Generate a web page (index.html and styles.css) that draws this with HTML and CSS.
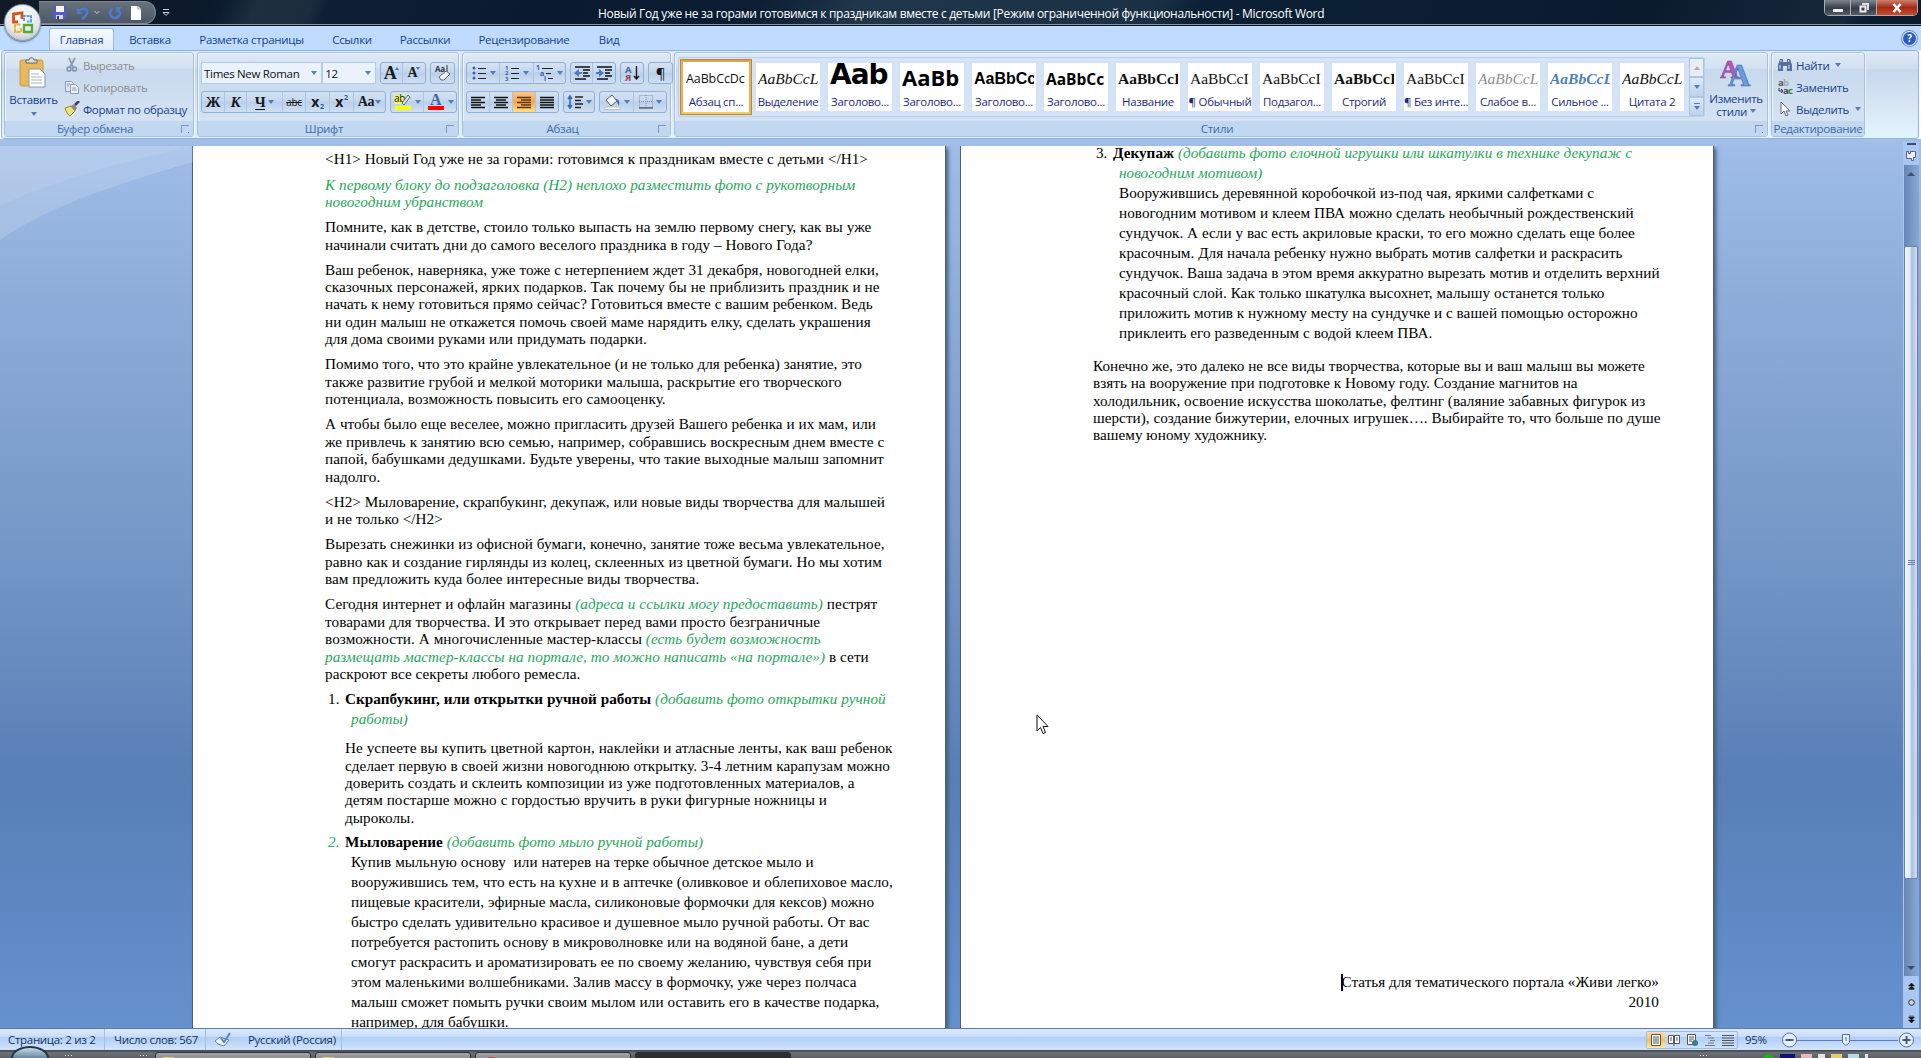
FILE: index.html
```html
<!DOCTYPE html>
<html lang="ru">
<head>
    <meta charset="UTF-8">
    <title>Новый Год уже не за горами - Microsoft Word</title>
    <link rel="stylesheet" href="styles.css">
</head>
<body>
    <div class="window">
        <header class="titlebar">
            <div class="quick-access">
                <svg width="16" height="16" viewBox="0 0 16 16"><path d="M1 1h13v13H2l-1-1z" fill="#5459c8"/><path d="M4 1h8v6H4z" fill="#f3f5ff"/><path d="M4 10h7v4H4z" fill="#dde"/><path d="M5 11h2v3H5z" fill="#333a90"/></svg>
                <svg width="14" height="14" viewBox="0 0 14 14"><path d="M3 5c4-4 9-2 8 2-.5 2-2 4-5 6" fill="none" stroke="#4a7ad8" stroke-width="2.4"/><path d="M1 2v6h6z" fill="#4a7ad8"/></svg>
                <svg class="qa-arrow" width="6" height="5" viewBox="0 0 6 5"><path d="M.5 1l2.500 2.500 2.500-2.500" fill="none" stroke="#c5ccd8"/></svg>
                <svg width="14" height="14" viewBox="0 0 14 14"><path d="M4 3c-4 4-1 9 3 9s7-5 3-8" fill="none" stroke="#4a7ad8" stroke-width="2.500"/><path d="M8 7V1h6z" fill="#4a7ad8"/></svg>
                <svg width="12" height="16" viewBox="0 0 12 16"><path d="M1 1h7l3 3v11H1z" fill="#fff"/><path d="M8 1v3h3" fill="none" stroke="#999"/></svg>
            </div>
            <svg class="qa-more" width="8" height="9" viewBox="0 0 8 9"><path d="M1 1.500h6M1 4.500h6L4 7.500z" fill="none" stroke="#cdd3dc"/></svg>
            <div class="title">Новый Год уже не за горами готовимся к праздникам вместе с детьми [Режим ограниченной функциональности] - Microsoft Word</div>
            <div class="window-buttons">
                <span class="wb"><svg width="12" height="12" viewBox="0 0 12 12"><path d="M1 7h10v3H1z" fill="#eee"/></svg></span>
                <span class="wb"><svg width="12" height="12" viewBox="0 0 12 12"><path d="M4 1h7v7H9V3H4z" fill="#ddd"/><path d="M2.500 4.500h5v5h-5z" fill="none" stroke="#eee" stroke-width="2"/></svg></span>
                <span class="wb close"><svg width="12" height="12" viewBox="0 0 12 12"><path d="M2.500 2l7 8M9.500 2l-7 8" stroke="#fff" stroke-width="2.600"/></svg></span>
            </div>
        </header>

        <div class="office-button">
            <svg width="24" height="24" viewBox="0 0 24 24" fill="none" stroke-width="2.800">
                <path d="M7 11H2.500V3L11 1.800V8" stroke="#d8501c"/>
                <path d="M13 10V5h7v5.500h-4" stroke="#5a9cdc" stroke-width="2" stroke-dasharray="3 .8"/>
                <path d="M9.500 13.500H4V21h6v-4" stroke="#eeb32c" stroke-width="2" stroke-dasharray="4 .8"/>
                <path d="M13 22V14h8v7h-8" stroke="#59a834" stroke-width="2.300"/>
            </svg>
        </div>

        <nav class="tabs">
            <span class="tab active">Главная</span>
            <span class="tab t-insert">Вставка</span>
            <span class="tab t-layout">Разметка страницы</span>
            <span class="tab t-refs">Ссылки</span>
            <span class="tab t-mail">Рассылки</span>
            <span class="tab t-review">Рецензирование</span>
            <span class="tab t-view">Вид</span>
            <span class="help">?</span>
        </nav>

        <section class="ribbon">
            <div class="group g-clipboard">
                <div class="group-body">
                    <div class="big-button paste">
                        <svg width="30" height="32" viewBox="0 0 30 32"><rect x="1" y="3" width="23" height="26" rx="2" fill="#e8b85a" stroke="#c99a45"/><path d="M7 6V3h3c0-3 5-3 5 0h3v3z" fill="#ddd" stroke="#666"/><path d="M10 12h11l5 5v13H10z" fill="#fff" stroke="#8795b5"/><path d="M12 17h8M12 20h11M12 23h11M12 26h11" stroke="#a8b3cc"/></svg>
                        <span>Вставить</span>
                        <i class="arrow"></i>
                    </div>
                    <div class="small-list">
                        <div class="small-item disabled"><svg width="16" height="16" viewBox="0 0 16 16"><path d="M5 1l4 9M11 1L6 10" stroke="#8a9ab5" stroke-width="1.800"/><circle cx="5" cy="12" r="2" fill="none" stroke="#7d8eac" stroke-width="1.500"/><circle cx="10.500" cy="12" r="2" fill="none" stroke="#7d8eac" stroke-width="1.500"/></svg>Вырезать</div>
                        <div class="small-item disabled"><svg width="16" height="16" viewBox="0 0 16 16"><path d="M1.500 2.500h6l2 2v8h-8z" fill="#dfe6f2" stroke="#8b9bb8"/><path d="M6.500 5.500h5l3 3v6h-8z" fill="#eef2f9" stroke="#8b9bb8"/><path d="M8 9h4M8 11h5M3 5h3M3 7h2" stroke="#8b9bb8"/></svg>Копировать</div>
                        <div class="small-item"><svg width="16" height="16" viewBox="0 0 16 16"><path d="M1 7l6-2 4 5-5 5c-2-1-4-4-5-8z" fill="#f1df7c" stroke="#98852e"/><path d="M7 5l3-2 3 4-2 3z" fill="#888"/><path d="M11 4l4-4" stroke="#3c3c70" stroke-width="2.500"/></svg>Формат по образцу</div>
                    </div>
                </div>
                <div class="group-label"><span>Буфер обмена</span><i class="launcher"></i></div>
            </div>

            <div class="group g-font">
                <div class="group-body rows">
                    <div class="tool-row">
                        <div class="combo font-name">Times New Roman<i class="arrow"></i></div>
                        <div class="combo font-size">12<i class="arrow"></i></div>
                        <div class="tools">
                            <span class="tool w22 serif"><b class="grow">A</b><i class="mark up"></i></span>
                            <span class="tool w22 serif"><b class="shrink">A</b><i class="mark"></i></span>
                        </div>
                        <div class="tools">
                            <span class="tool w23"><svg width="18" height="18" viewBox="0 0 18 18"><text x="1" y="8" font-size="8" font-weight="bold" fill="#334">Aa</text><path d="M13 1v7" stroke="#334"/><path d="M5 13l7-6 4 3-6 6H7z" fill="#f5f5fa" stroke="#667"/></svg></span>
                        </div>
                    </div>
                    <div class="tool-row">
                        <div class="tools">
                            <span class="tool w23 serif"><b>Ж</b></span>
                            <span class="tool w22 serif"><b><i>К</i></b></span>
                            <span class="tool w35 serif"><b class="under">Ч</b><i class="arrow"></i></span>
                            <span class="tool w23 strike">abc</span>
                            <span class="tool w24 bold">x<sub>2</sub></span>
                            <span class="tool w24 bold">x<sup>2</sup></span>
                            <span class="tool w31 serif aa"><b>Aa</b><i class="arrow"></i></span>
                        </div>
                        <div class="tools">
                            <span class="tool w33"><svg width="18" height="18" viewBox="0 0 18 18"><path d="M0 2h11v9H0z" fill="#f5f36a"/><text x="0" y="9" font-size="10" fill="#111">ab</text><path d="M8 10l6-8 2 2-6 8z" fill="#dce5f5" stroke="#567"/><path d="M1 13h16v4H1z" fill="#ff0"/></svg><i class="arrow"></i></span>
                            <span class="tool w32"><svg width="18" height="18" viewBox="0 0 18 18"><text class="svg-serif" x="3" y="12" font-size="16" font-weight="bold" fill="#3f62a8">A</text><path d="M1 13h16v4H1z" fill="#f00"/></svg><i class="arrow"></i></span>
                        </div>
                    </div>
                </div>
                <div class="group-label"><span>Шрифт</span><i class="launcher"></i></div>
            </div>

            <div class="group g-paragraph">
                <div class="group-body rows">
                    <div class="tool-row">
                        <div class="tools">
                            <span class="tool w33"><svg width="16" height="16" viewBox="0 0 16 16"><g fill="#3f5fa0"><circle cx="3" cy="3" r="1.500"/><circle cx="3" cy="8" r="1.500"/><circle cx="3" cy="13" r="1.500"/></g><path d="M7 3.500h8M7 8.500h8M7 13.500h8" stroke="#222"/></svg><i class="arrow"></i></span>
                            <span class="tool w34"><svg width="16" height="16" viewBox="0 0 16 16"><g fill="#3f5fa0" font-size="6" font-weight="bold"><text x="1" y="5">1</text><text x="1" y="10">2</text><text x="1" y="15.500">3</text></g><path d="M7 3.500h8M7 8.500h8M7 13.500h8" stroke="#222"/></svg><i class="arrow"></i></span>
                            <span class="tool w31"><svg width="18" height="16" viewBox="0 0 18 16"><g fill="#3f5fa0" font-size="7" font-weight="bold"><text x="0" y="5">1</text><text x="4" y="11">a</text><text x="8" y="16">i</text></g><path d="M6 3.500h11M10 8.500h5M12 13.500h5" stroke="#222"/></svg><i class="arrow"></i></span>
                        </div>
                        <div class="tools">
                            <span class="tool w22"><svg width="16" height="16" viewBox="0 0 16 16"><path d="M1 2h15M9 5h7M9 8h5M9 11h7M1 14h11" stroke="#111" stroke-width="1.500"/><path d="M0 8l5-4v3h3v2H5v3z" fill="#4e78bd"/></svg></span>
                            <span class="tool w22"><svg width="16" height="16" viewBox="0 0 16 16"><path d="M1 2h15M9 5h7M9 8h5M9 11h7M1 14h11" stroke="#111" stroke-width="1.500"/><path d="M8 8L3 4v3H0v2h3v3z" fill="#4e78bd"/></svg></span>
                        </div>
                        <div class="tools">
                            <span class="tool w22"><svg width="16" height="16" viewBox="0 0 16 16"><g font-size="9.500" font-weight="bold"><text x="1" y="8" fill="#3f5fa0">А</text><text x="1" y="16" fill="#a04048">Я</text></g><path d="M12.500 1v13M10 11l2.500 3 2.500-3" fill="none" stroke="#111" stroke-width="1.300"/></svg></span>
                        </div>
                        <div class="tools">
                            <span class="tool w23 pilcrow">¶</span>
                        </div>
                    </div>
                    <div class="tool-row">
                        <div class="tools">
                            <span class="tool w23"><svg width="14" height="14" viewBox="0 0 14 14"><path d="M0 2.500h14M0 5h10M0 7.500h14M0 10h10M0 12.500h14" stroke="#111" stroke-width="1.300"/></svg></span>
                            <span class="tool w23"><svg width="14" height="14" viewBox="0 0 14 14"><path d="M0 2.500h14M2 5h10M0 7.500h14M2 10h10M0 12.500h14" stroke="#111" stroke-width="1.300"/></svg></span>
                            <span class="tool w23 pressed"><svg width="14" height="14" viewBox="0 0 14 14"><path d="M0 2.500h14M4 5h10M0 7.500h14M4 10h10M0 12.500h14" stroke="#5a3409" stroke-width="1.300"/></svg></span>
                            <span class="tool w22"><svg width="14" height="14" viewBox="0 0 14 14"><path d="M0 2.500h14M0 5h14M0 7.500h14M0 10h14M0 12.500h14" stroke="#111" stroke-width="1.300"/></svg></span>
                        </div>
                        <div class="tools">
                            <span class="tool w30"><svg width="16" height="16" viewBox="0 0 16 16"><path d="M3 2v12M1 5l2-3 2 3M1 11l2 3 2-3" fill="none" stroke="#3f6bb5" stroke-width="1.600"/><path d="M8 3h8M8 6.500h6M8 10h8M8 13.500h6" stroke="#222" stroke-width="1.300"/></svg><i class="arrow"></i></span>
                        </div>
                        <div class="tools">
                            <span class="tool w34"><svg width="17" height="16" viewBox="0 0 17 16"><path d="M2 6l6-5 5 6-6 5z" fill="#f4f6fb" stroke="#556"/><path d="M12 5c3 0 4 3 3 7l-3-5z" fill="#4671b5"/><path d="M1 13h15v2.500H1z" fill="#fff" stroke="#aaa" stroke-width=".6"/></svg><i class="arrow"></i></span>
                            <span class="tool w32"><svg width="14" height="14" viewBox="0 0 14 14"><path d="M.5.500h13v12H.500zM7 0v13M0 6.500h14" fill="none" stroke="#8792a6" stroke-dasharray="1 1"/><path d="M0 13h14" stroke="#333"/></svg><i class="arrow"></i></span>
                        </div>
                    </div>
                </div>
                <div class="group-label"><span>Абзац</span><i class="launcher"></i></div>
            </div>

            <div class="group g-styles">
                <div class="group-body">
                    <div class="gallery">
                        <div class="style-tile selected"><b class="sample sans">AaBbCcDc</b><span>Абзац сп...</span></div>
                        <div class="style-tile"><b class="sample italic">AaBbCcL</b><span>Выделение</span></div>
                        <div class="style-tile"><b class="sample heading h-one">Aab</b><span>Заголово...</span></div>
                        <div class="style-tile"><b class="sample heading h-two">AaBb</b><span>Заголово...</span></div>
                        <div class="style-tile"><b class="sample heading h-three">AaBbCc</b><span>Заголово...</span></div>
                        <div class="style-tile"><b class="sample heading h-four">AaBbCc</b><span>Заголово...</span></div>
                        <div class="style-tile"><b class="sample strong">AaBbCcI</b><span>Название</span></div>
                        <div class="style-tile"><b class="sample">AaBbCcI</b><span>¶ Обычный</span></div>
                        <div class="style-tile"><b class="sample">AaBbCcI</b><span>Подзагол...</span></div>
                        <div class="style-tile"><b class="sample strong">AaBbCcI</b><span>Строгий</span></div>
                        <div class="style-tile"><b class="sample">AaBbCcI</b><span>¶ Без инте...</span></div>
                        <div class="style-tile"><b class="sample italic faint">AaBbCcL</b><span>Слабое в...</span></div>
                        <div class="style-tile"><b class="sample italic strong blue">AaBbCcL</b><span>Сильное ...</span></div>
                        <div class="style-tile"><b class="sample italic">AaBbCcL</b><span>Цитата 2</span></div>
                        <div class="gallery-scroll">
                            <span class="off"><i class="arrow up"></i></span>
                            <span><i class="arrow"></i></span>
                            <span class="more"><i class="arrow"></i></span>
                        </div>
                    </div>
                    <div class="big-button change-styles">
                        <svg width="32" height="30" viewBox="0 0 32 30"><g class="svg-serif" font-weight="bold"><text x="0" y="20" font-size="26" fill="#b45bb8" stroke="#8d3d94" stroke-width=".6">A</text><text x="8" y="28" font-size="31" fill="#6a9de0" stroke="#39639f" stroke-width=".6">A</text></g></svg>
                        <span>Изменить</span>
                        <span>стили <i class="arrow"></i></span>
                    </div>
                </div>
                <div class="group-label"><span>Стили</span><i class="launcher"></i></div>
            </div>

            <div class="group g-editing">
                <div class="group-body">
                    <div class="small-list">
                        <div class="small-item"><svg width="16" height="16" viewBox="0 0 16 16"><path d="M3 2h3v3h4V2h3l2 6v6h-5V9H6v5H1V8z" fill="#53709f"/><path d="M3 8v4M12 8v4M4 3v2M11.500 3v2" stroke="#dce6f5"/></svg>Найти<i class="arrow"></i></div>
                        <div class="small-item"><svg width="16" height="16" viewBox="0 0 16 16"><g font-size="9.500" font-weight="bold"><text x="1" y="7" fill="#555">a</text><text x="6" y="7" fill="#aaa">b</text><text x="6" y="15" fill="#444">a</text><text x="11" y="15" fill="#27882f">c</text></g><path d="M2 9v3h3M4 10l2 2-2 2" fill="none" stroke="#335"/></svg>Заменить</div>
                        <div class="small-item"><svg width="16" height="16" viewBox="0 0 16 16"><path d="M4 1v12l3-3 2 5 2-1-2-4h4z" fill="#fff" stroke="#667"/></svg>Выделить<i class="arrow"></i></div>
                    </div>
                </div>
                <div class="group-label"><span>Редактирование</span></div>
            </div>
        </section>

        <main class="workspace">
            <div class="canvas">
                <svg class="swoosh" width="193" height="300" viewBox="0 0 193 300"><path d="M0 0h193v16C110 40 50 60 0 94z" fill="#fff" opacity=".16"/><path d="M0 0h193C110 18 40 40 0 60z" fill="#fff" opacity=".08"/></svg>
                <article class="page first">
                    <p>&lt;H1&gt; Новый Год уже не за горами: готовимся к праздникам вместе с детьми &lt;/H1&gt;</p>
                    <p class="note">К первому блоку до подзаголовка (Н2) неплохо разместить фото с рукотворным<br>новогодним убранством</p>
                    <p>Помните, как в детстве, стоило только выпасть на землю первому снегу, как вы уже<br>начинали считать дни до самого веселого праздника в году – Нового Года?</p>
                    <p>Ваш ребенок, наверняка, уже тоже с нетерпением ждет 31 декабря, новогодней елки,<br>сказочных персонажей, ярких подарков. Так почему бы не приблизить праздник и не<br>начать к нему готовиться прямо сейчас? Готовиться вместе с вашим ребенком. Ведь<br>ни один малыш не откажется помочь своей маме нарядить елку, сделать украшения<br>для дома своими руками или придумать подарки.</p>
                    <p>Помимо того, что это крайне увлекательное (и не только для ребенка) занятие, это<br>также развитие грубой и мелкой моторики малыша, раскрытие его творческого<br>потенциала, возможность повысить его самооценку.</p>
                    <p>А чтобы было еще веселее, можно пригласить друзей Вашего ребенка и их мам, или<br>же привлечь к занятию всю семью, например, собравшись воскресным днем вместе с<br>папой, бабушками дедушками. Будьте уверены, что такие выходные малыш запомнит<br>надолго.</p>
                    <p>&lt;H2&gt; Мыловарение, скрапбукинг, декупаж, или новые виды творчества для малышей<br>и не только &lt;/H2&gt;</p>
                    <p>Вырезать снежинки из офисной бумаги, конечно, занятие тоже весьма увлекательное,<br>равно как и создание гирлянды из колец, склеенных из цветной бумаги. Но мы хотим<br>вам предложить куда более интересные виды творчества.</p>
                    <p>Сегодня интернет и офлайн магазины <em>(адреса и ссылки могу предоставить)</em> пестрят<br>товарами для творчества. И это открывает перед вами просто безграничные<br>возможности. А многочисленные мастер-классы <em>(есть будет возможность<br>размещать мастер-классы на портале, то можно написать «на портале»)</em> в сети<br>раскроют все секреты любого ремесла.</p>
                    <div class="item"><span class="num">1.</span><b>Скрапбукинг, или открытки ручной работы</b> <em>(добавить фото открытки ручной<br><span class="hang">работы)</span></em></div>
                    <p class="inset">Не успеете вы купить цветной картон, наклейки и атласные ленты, как ваш ребенок<br>сделает первую в своей жизни новогоднюю открытку. 3-4 летним карапузам можно<br>доверить создать и склеить композиции из уже подготовленных материалов, а<br>детям постарше можно с гордостью вручить в руки фигурные ножницы и<br>дыроколы.</p>
                    <div class="item"><em class="num">2.</em><b>Мыловарение</b> <em>(добавить фото мыло ручной работы)</em></div>
                    <p class="wide">Купив мыльную основу&nbsp; или натерев на терке обычное детское мыло и<br>вооружившись тем, что есть на кухне и в аптечке (оливковое и облепиховое масло,<br>пищевые красители, эфирные масла, силиконовые формочки для кексов) можно<br>быстро сделать удивительно красивое и душевное мыло ручной работы. От вас<br>потребуется растопить основу в микроволновке или на водяной бане, а дети<br>смогут раскрасить и ароматизировать ее по своему желанию, чувствуя себя при<br>этом маленькими волшебниками. Залив массу в формочку, уже через полчаса<br>малыш сможет помыть ручки своим мылом или оставить его в качестве подарка,<br>например, для бабушки.</p>
                </article>
                <article class="page second">
                    <div class="item"><span class="num">3.</span><b>Декупаж</b> <em>(добавить фото елочной игрушки или шкатулки в технике декупаж с<br><span class="hang">новогодним мотивом)</span></em></div>
                    <p class="wide">Вооружившись деревянной коробочкой из-под чая, яркими салфетками с<br>новогодним мотивом и клеем ПВА можно сделать необычный рождественский<br>сундучок. А если у вас есть акриловые краски, то его можно сделать еще более<br>красочным. Для начала ребенку нужно выбрать мотив салфетки и раскрасить<br>сундучок. Ваша задача в этом время аккуратно вырезать мотив и отделить верхний<br>красочный слой. Как только шкатулка высохнет, малышу останется только<br>приложить мотив к нужному месту на сундучке и с вашей помощью осторожно<br>приклеить его разведенным с водой клеем ПВА.</p>
                    <p class="closing">Конечно же, это далеко не все виды творчества, которые вы и ваш малыш вы можете<br>взять на вооружение при подготовке к Новому году. Создание магнитов на<br>холодильник, освоение искусства шоколатье, фелтинг (валяние забавных фигурок из<br>шерсти), создание бижутерии, елочных игрушек…. Выбирайте то, что больше по душе<br>вашему юному художнику.</p>
                    <p class="signature"><span class="caret"></span>Статья для тематического портала «Живи легко»<br>2010</p>
                </article>
                <svg class="pointer" width="13" height="21" viewBox="0 0 13 21"><path d="M1 1v16l3.500-3.500L7 19.500l2.500-1-2.500-6h5z" fill="#fff" stroke="#111"/></svg>
            </div>
            <aside class="scrollbar">
                <i class="split"></i>
                <svg class="ruler-toggle" width="13" height="13" viewBox="0 0 13 13"><path d="M1.500 2.500h2v2h2v-2h5v6h-2v3h-2v-2h-5z" fill="#eef2fa" stroke="#55617c"/></svg>
                <div class="track">
                    <i class="arrow up dark"></i>
                    <div class="thumb"><i></i><i></i><i></i></div>
                    <i class="arrow dark"></i>
                </div>
                <svg class="browse" width="15" height="50" viewBox="0 0 15 50"><path d="M7.500 5l3 3h-6zM7.500 8l3 3h-6zM5 11.500h5M7.500 45l3-3h-6zM7.500 42l3-3h-6zM5 38h5" fill="#111" stroke="#111" stroke-width=".5"/><circle cx="7.500" cy="24.500" r="2.800" fill="#cfd3d8" stroke="#333"/></svg>
            </aside>
        </main>

        <footer class="statusbar">
            <span class="cell c-page">Страница: 2 из 2</span>
            <span class="cell c-words">Число слов: 567</span>
            <span class="cell c-lang"><svg width="17" height="16" viewBox="0 0 17 16"><path d="M1 9l5-4 9 3-5 6-6-2z" fill="#eef2fb" stroke="#6f7fa5"/><path d="M7 6l3 4 6-9" fill="none" stroke="#5a82c4" stroke-width="2"/></svg>Русский (Россия)</span>
            <div class="views">
                <span class="view on"><svg width="12" height="12" viewBox="0 0 12 12"><path d="M1.500.500h9v11h-9z" fill="#fff" stroke="#555"/><path d="M3 3h6M3 5h6M3 7h6M3 9h6" stroke="#555"/></svg></span>
                <span class="view"><svg width="12" height="12" viewBox="0 0 12 12"><path d="M.5 1.500h5v8h-5zM6.500 1.500h5v8h-5z" fill="#fff" stroke="#555"/><path d="M2 4h2M2 6h2M8 4h2M8 6h2M6 9v3" stroke="#555"/></svg></span>
                <span class="view"><svg width="12" height="12" viewBox="0 0 12 12"><path d="M1.500.500h8v10h-8z" fill="#fff" stroke="#555"/><path d="M3 3h5M3 5h5M3 7h3" stroke="#555"/><circle cx="9" cy="9" r="3" fill="#3a7a8c"/></svg></span>
                <span class="view"><svg width="12" height="12" viewBox="0 0 12 12"><path d="M1 1.500h6M4 4h6M6 6.500h5M4 9h6M1 11.500h10" stroke="#777"/></svg></span>
                <span class="view"><svg width="12" height="12" viewBox="0 0 12 12"><path d="M0 1.500h12M0 4h12M0 6.500h12M0 9h12M0 11.500h12" stroke="#555"/></svg></span>
            </div>
            <span class="zoom-value">95%</span>
            <svg class="zoom-slider" width="136" height="20" viewBox="0 0 136 20"><path d="M16 10.500h102" stroke="#5f7bb0"/><circle cx="9.500" cy="10" r="7" fill="#e6eefb" stroke="#5571a5"/><path d="M5.500 10h8" stroke="#44598a" stroke-width="2"/><circle cx="126.500" cy="10" r="7" fill="#e6eefb" stroke="#5571a5"/><path d="M122.500 10h8M126.500 6v8" stroke="#44598a" stroke-width="2"/><path d="M62.500 4.500h7v8l-3.500 3-3.500-3z" fill="#e6eefb" stroke="#5571a5"/><path d="M66 7v4" stroke="#5571a5"/></svg>
        </footer>

        <div class="taskbar">
            <div class="start"><svg width="22" height="12" viewBox="0 0 22 12"><path d="M1 12c1-4 4-6 9-5v5z" fill="#dd5a2e"/><path d="M11 7c4 1 6 1 9-1l1 6H11z" fill="#7cb342"/></svg></div>
            <span class="dots d-one"><i></i><i></i><i></i></span>
            <span class="dots d-two"><i></i><i></i><i></i></span>
            <span class="task first-task"><i class="folder"></i></span>
            <span class="task"><i class="folder"></i></span>
            <span class="task"><i class="red"></i></span>
            <span class="task current"></span>
            <div class="tray">
                <span class="dots"><i></i><i></i><i></i></span>
                <b class="green"></b><b class="navy"></b><b class="pink"></b><b class="white"></b><b class="yellow"></b><b class="teal"></b><b class="white thin"></b>
            </div>
        </div>
    </div>
</body>
</html>
```
FILE: styles.css
```css
* {
    margin: 0;
    padding: 0;
    box-sizing: border-box;
}

body {
    font-family: "Open Sans", "Noto Sans", sans-serif;
    font-size: 11.500px;
    letter-spacing: -.3px;
    overflow: hidden;
}

svg {
    display: block;
    flex: none;
}

svg text {
    font-family: "Open Sans", sans-serif;
}

svg text.svg-serif,
.svg-serif text {
    font-family: "Liberation Serif", serif;
}

.window {
    position: relative;
    width: 1921px;
    height: 1058px;
    display: flex;
    flex-direction: column;
    overflow: hidden;
}

/* title bar */
.titlebar {
    height: 26px;
    flex: none;
    display: flex;
    align-items: flex-start;
    background: linear-gradient(115deg, #101b26 0, #0b1929 180px, #0b1c2e 205px, #1d303f 235px, #1a2c3d 285px, #0d1f33 300px, #0a1b2f 500px, #0b1e34 690px, #20364a 780px, #1a3044 1050px, #0b2035 1090px, #0a1b2e 1500px, #15283a 1680px, #0a1c30 1700px);
    border-bottom: 1px solid #0a1320;
    box-shadow: inset 0 -1px 0 #8c9299;
}

.quick-access {
    width: 117px;
    height: 23px;
    margin: 1px 0 0 39px;
    padding: 0 13px 0 13px;
    display: flex;
    align-items: center;
    gap: 8px;
    background: linear-gradient(#68717c, #4c5866);
    border: 1px solid #7d8691;
    border-left: 0;
    border-radius: 0 12px 12px 0;
}

.qa-arrow {
    margin: 0 0 0 -4px;
}

.qa-more {
    margin: 8px 0 0 6px;
}

.title {
    flex: 1;
    padding-left: 428px;
    line-height: 27px;
    font-size: 12px;
    letter-spacing: -.32px;
    color: #fff;
    white-space: nowrap;
}

.window-buttons {
    width: 94px;
    height: 16px;
    margin-right: 3px;
    display: flex;
    border: 1px solid #a9adb2;
    border-top: 0;
    border-radius: 0 0 5px 5px;
    overflow: hidden;
}

.wb {
    width: 26px;
    display: flex;
    align-items: center;
    justify-content: center;
    background: linear-gradient(#7e858d, #333c47 55%, #535e69);
    border-right: 1px solid #a9adb2;
}

.wb.close {
    flex: 1;
    border: 0;
    background: linear-gradient(#c98170, #a52a16 50%, #c94b27);
}

.office-button {
    position: absolute;
    left: 4px;
    top: 4px;
    width: 37px;
    height: 37px;
    display: flex;
    align-items: center;
    justify-content: center;
    border-radius: 50%;
    background: radial-gradient(circle at 50% 30%, #fff, #e3e6ec 60%, #a8b2c2);
    border: 1px solid #8d9bb0;
    box-shadow: 0 1px 2px #56677f;
}

/* tabs */
.tabs {
    height: 24px;
    flex: none;
    display: flex;
    padding: 2px 5px 0 49px;
    background: #bfdbff;
    color: #15428b;
}

.tab {
    text-align: center;
    line-height: 24px;
    white-space: nowrap;
}

.tab.active {
    width: 65px;
    margin-right: 1px;
    background: linear-gradient(#f5faff, #e1ebf8);
    border: 1px solid #9abbe6;
    border-bottom: 0;
    border-radius: 3px 3px 0 0;
    line-height: 22px;
}

.t-insert { width: 70px; }
.t-layout { width: 133px; }
.t-refs { width: 68px; }
.t-mail { width: 78px; }
.t-review { width: 120px; }
.t-view { width: 50px; }

.help {
    width: 13px;
    height: 13px;
    margin: 4px 0 0 auto;
    border-radius: 50%;
    background: #2a5cc4;
    box-shadow: 0 0 0 1px #dbe8fb, 0 0 0 2px #6c8fc9;
    color: #fff;
    font-size: 10px;
    font-weight: bold;
    line-height: 13px;
    text-align: center;
}

/* ribbon */
.ribbon {
    height: 89px;
    flex: none;
    display: flex;
    align-items: flex-start;
    gap: 3px;
    padding: 1px 2px 0 3px;
    margin: 0 2px 0 1px;
    background: linear-gradient(#dfeaf7, #cfdeef 20%, #c6d8ec 22%, #dbe9f6 70%, #e0f5ff);
    border: 1px solid #8db2e3;
    border-radius: 3px;
}

.group {
    height: 85px;
    display: flex;
    flex-direction: column;
    border: 1px solid #a6c1dd;
    border-radius: 3px;
    background: linear-gradient(#dfe9f5, #d3e1f0 18%, #c8d9ed 20%, #d8e6f5);
    box-shadow: inset 1px 1px 0 #edf4fb, 1px 0 0 #edf4fb;
}

.g-clipboard { width: 190px; margin-left: -1px; }
.g-font { width: 262px; }
.g-paragraph { width: 209px; }
.g-styles { width: 1094px; }
.g-editing { width: 94px; }

.group-body {
    height: 68px;
    flex: none;
    display: flex;
}

.group-label {
    flex: 1;
    display: flex;
    align-items: center;
    padding: 0 4px;
    background: #c1d8f0;
    color: #3e6aaa;
    line-height: 15px;
    white-space: nowrap;
}

.group-label span {
    flex: 1;
    text-align: center;
}

.g-editing .group-label {
    padding: 0;
}

.launcher {
    width: 8px;
    height: 8px;
    border: 1px solid #7b9bc5;
    border-right: 0;
    border-bottom: 0;
    background: linear-gradient(135deg, transparent 50%, #66809f 50%) 3px 3px no-repeat;
}

.arrow {
    display: inline-block;
    flex: none;
    border: 3px solid transparent;
    border-top: 4px solid #567db1;
    border-bottom: 0;
}

.arrow.up {
    border-top: 0;
    border-bottom: 4px solid #a8b2be;
}

.big-button {
    display: flex;
    flex-direction: column;
    align-items: center;
    color: #15428b;
}

.paste {
    width: 57px;
    padding-top: 4px;
}

.paste span {
    margin-top: 3px;
    line-height: 16px;
}

.paste .arrow {
    margin-top: 4px;
}

.small-list {
    display: flex;
    flex-direction: column;
    padding: 1px 0 0 2px;
}

.small-item {
    height: 22px;
    display: flex;
    align-items: center;
    gap: 3px;
    color: #15428b;
    white-space: nowrap;
}

.small-item.disabled {
    color: #8d8d8d;
}

.small-item .arrow {
    margin-left: 3px;
}

.g-editing .small-list {
    padding-left: 5px;
}

.rows {
    flex-direction: column;
    gap: 7px;
    padding: 9px 3px 0;
}

.tool-row {
    display: flex;
    gap: 4px;
}

.combo {
    height: 22px;
    display: flex;
    align-items: center;
    justify-content: space-between;
    padding: 0 4px 0 2px;
    background: #eaf2fb;
    border: 1px solid #b3cbe8;
    color: #111;
    white-space: nowrap;
}

.font-name { width: 124px; }
.font-size { width: 55px; margin-left: -4px; }

.tools {
    height: 22px;
    display: flex;
    border: 1px solid #8fb0da;
    border-radius: 3px;
    background: linear-gradient(#d5e3f3, #c4d7ee 45%, #b9cfea 50%, #cfe0f3);
}

.tool {
    height: 20px;
    display: flex;
    align-items: center;
    justify-content: center;
    gap: 3px;
    border-right: 1px solid #adc6e4;
    color: #1a1a1a;
    line-height: 18px;
}

.tool:last-child {
    border-right: 0;
}

.w22 { width: 22px; }
.w23 { width: 23px; }
.w24 { width: 24px; }
.w30 { width: 30px; }
.w31 { width: 31px; }
.w32 { width: 32px; }
.w33 { width: 33px; }
.w34 { width: 34px; }
.w35 { width: 36px; }

.tool sup,
.tool sub {
    font-size: 7px;
    margin-left: -2px;
    color: #31599c;
}

.tool sup { align-self: flex-start; line-height: 11px; }
.tool sub { align-self: flex-end; line-height: 11px; }

.mark {
    align-self: flex-start;
    margin: 4px 0 0 -4px;
    border: 2.500px solid transparent;
    border-top: 3px solid #4a6fae;
    border-bottom: 0;
}

.mark.up {
    border-top: 0;
    border-bottom: 3px solid #4a6fae;
}

.serif {
    font-family: "Liberation Serif", serif;
    font-size: 15px;
}

.grow { font-size: 18px; }
.shrink { font-size: 14px; }
.aa { font-size: 14px; gap: 1px; }
.under { border-bottom: 1px solid #111; line-height: 14px; }
.strike { font-size: 10px; text-decoration: line-through; letter-spacing: -.3px; }
.bold { font-weight: bold; font-size: 14px; }
.pilcrow { font-size: 15px; }

.pressed {
    background: linear-gradient(#fbc48a, #f9a64b 50%, #ffe08a);
}

/* styles gallery */
.gallery {
    width: 1027px;
    height: 60px;
    margin: 4px 0 0 3px;
    padding: 1px 0 0 1px;
    display: flex;
    background: #d4e4f6;
    border: 1px solid #b9d0ed;
    border-radius: 2px;
}

.style-tile {
    width: 64px;
    height: 48px;
    margin: 4px;
    padding: 0 2px;
    flex: none;
    background: #fff;
    overflow: hidden;
}

.style-tile.selected {
    width: 72px;
    height: 56px;
    margin: 0;
    padding: 1px 3px;
    border: 3px solid #f3b545;
    border-color: #e3a04e #f0ae4c #f5cf60;
    outline: 1px solid #b98a45;
    outline-offset: -1px;
}

.style-tile span {
    display: block;
    margin: 0 -2px;
    color: #1e2b7b;
    line-height: 16px;
    text-align: center;
    white-space: nowrap;
}

.sample {
    display: block;
    height: 31px;
    line-height: 32px;
    font-family: "Liberation Serif", serif;
    font-size: 15.500px;
    font-weight: normal;
    letter-spacing: 0;
    color: #111;
    overflow: hidden;
    white-space: nowrap;
}

.sample.italic { font-style: italic; }
.sample.strong { font-weight: bold; }
.sample.faint { color: #909090; }
.sample.blue { color: #4f81bd; }
.sample.sans { font-family: "Open Sans", sans-serif; font-size: 12.500px; letter-spacing: -.1px; }

.sample.heading {
    font-family: "Liberation Sans", sans-serif;
    font-weight: bold;
    color: #000;
}

.sample.h-one { font-size: 28px; line-height: 24px; font-family: "DejaVu Sans", sans-serif; letter-spacing: -1px; }
.sample.h-two { font-size: 22px; line-height: 29px; font-family: "Open Sans", sans-serif; }
.sample.h-three { font-size: 16px; }
.sample.h-four { font-size: 15.500px; font-family: "Open Sans", sans-serif; }

.gallery-scroll {
    width: 15px;
    margin: -1px 0 0 auto;
    display: flex;
    flex-direction: column;
}

.gallery-scroll span {
    flex: 1;
    display: flex;
    align-items: center;
    justify-content: center;
    background: linear-gradient(#dce9f8, #bdd3ee);
    border: 1px solid #abc5e4;
}

.gallery-scroll .off {
    background: #eaeef2;
}

.gallery-scroll .more {
    flex-direction: column;
    gap: 2px;
}

.gallery-scroll .more::before {
    content: "";
    width: 6px;
    height: 1px;
    background: #567db1;
}

.change-styles {
    width: 62px;
    padding-top: 5px;
}

.change-styles span {
    line-height: 13px;
}

.change-styles svg {
    margin-bottom: 4px;
}

.change-styles .arrow {
    vertical-align: 3px;
}

/* document area */
.workspace {
    flex: none;
    height: 889px;
    display: flex;
    padding-top: 7px;
    background: linear-gradient(#a3c0e8, #9fbde7 7px, #9dbbe6 20px, #8dadd9 160px, #7598c8 400px, #587fb6 640px, #5d86c0 740px, #6591cd);
}

.canvas {
    position: relative;
    width: 1903px;
    height: 882px;
    display: flex;
    gap: 16px;
    padding-left: 193px;
    overflow: hidden;
}

.swoosh {
    position: absolute;
    left: 0;
    top: 0;
}

.page {
    width: 752px;
    height: 882px;
    flex: none;
    background: #fff;
    box-shadow: -1px 0 0 #4d5f7c, 1px 0 0 #4d5f7c, 3px 2px 4px #44597c;
    color: #000;
    font-family: "Liberation Serif", serif;
    font-size: 15.200px;
    line-height: 17.400px;
    letter-spacing: .06px;
    white-space: nowrap;
    overflow: hidden;
}

.first { padding: 4.400px 0 0 132px; }
.second { padding: 0 0 0 132px; display: flex; flex-direction: column; letter-spacing: .03px; }

.page p {
    margin-bottom: 7.750px;
}

.page em,
.page .note {
    font-style: italic;
    color: #1fa75a;
}

.page .item {
    line-height: 20px;
    padding-left: 20px;
}

.first .item {
    margin-top: -1px;
}

.num {
    display: inline-block;
    width: 17px;
    margin-left: -17px;
}

.hang {
    margin-left: 6px;
}

.page .inset {
    padding-left: 20px;
    margin-top: 10px;
    margin-bottom: 7px;
}

.page .wide {
    padding-left: 26px;
    line-height: 20px;
}

.page.second .item { margin-top: -3.500px; }
.page .closing { margin-top: 6.500px; }

.page .signature {
    margin: auto 54px 16px 0;
    line-height: 20px;
    text-align: right;
}

.caret {
    display: inline-block;
    width: 2px;
    height: 17px;
    margin-right: -2px;
    vertical-align: -4px;
    background: #000;
}

.pointer {
    position: absolute;
    left: 1036px;
    top: 568px;
}

.scrollbar {
    width: 16px;
    margin-top: -4px;
    display: flex;
    flex-direction: column;
    align-items: center;
    background: #a9c7f0;
}

.split {
    width: 9px;
    height: 2px;
    margin-top: 1px;
    background: #3d4a66;
}

.ruler-toggle {
    margin: 4px 0 3px;
}

.track {
    width: 15px;
    height: 812px;
    display: flex;
    flex-direction: column;
    align-items: center;
    justify-content: space-between;
    padding: 7px 0 6px;
    background: linear-gradient(90deg, #6585b4, #7f9fcc 70%, #89a9d4);
}

.arrow.dark { border-width: 4px; border-top-color: #3d4f6e; border-bottom-width: 0; }
.arrow.up.dark { border-top: 0; border-bottom: 4px solid #3d4f6e; }

.thumb {
    width: 14px;
    height: 633px;
    margin-top: -17px;
    display: flex;
    flex-direction: column;
    align-items: center;
    justify-content: center;
    gap: 1px;
    border: 1px solid #6482b2;
    border-radius: 2px;
    background: linear-gradient(90deg, #f4f8fd, #dce7f5 45%, #a9bfdd 55%, #d2dfef);
}

.thumb i {
    width: 7px;
    height: 1px;
    background: #6a83ab;
}

.browse {
    margin-top: 2px;
}

/* status bar */
.statusbar {
    height: 22px;
    flex: none;
    display: flex;
    align-items: center;
    border-top: 1px solid #5c7ba8;
    background: linear-gradient(#dceafd, #cadffb 35%, #b0cef5 40%, #d3e5fd);
    color: #15335f;
    white-space: nowrap;
}

.cell {
    height: 21px;
    display: flex;
    align-items: center;
    padding-left: 8px;
    border-right: 1px solid #a2bfe5;
}

.c-page { width: 105px; }
.c-words { width: 101px; padding-left: 9px; }
.c-lang { width: 136px; gap: 17px; }

.views {
    width: 92px;
    height: 18px;
    margin-left: auto;
    display: flex;
    border: 1px solid #9dbce4;
    border-radius: 2px;
}

.view {
    flex: 1;
    display: flex;
    align-items: center;
    justify-content: center;
}

.view.on {
    background: linear-gradient(#fcdfa5, #f9bf5c 50%, #fde9a5);
}

.zoom-value {
    width: 42px;
    padding-left: 7px;
}

.zoom-slider {
    margin-right: 5px;
}

/* taskbar */
.taskbar {
    height: 8px;
    flex: none;
    display: flex;
    align-items: flex-start;
    background: linear-gradient(#3e4247, #6e7176 3px, #5b5e62);
    overflow: hidden;
}

.start {
    position: absolute;
    left: 11px;
    top: 1046px;
    width: 38px;
    height: 12px;
    display: flex;
    justify-content: center;
    padding-top: 4px;
    border: 2px solid #22364b;
    border-bottom: 0;
    border-radius: 19px 19px 0 0 / 12px 12px 0 0;
    background: linear-gradient(#c9d8e4, #65849b);
    overflow: hidden;
}

.dots {
    display: flex;
    gap: 2px;
    padding-top: 5px;
}

.dots i {
    width: 1px;
    height: 1px;
    background: #e6e6e6;
}

.d-one { margin-left: 65px; width: 75px; }
.d-two { width: 15px; }

.task {
    width: 156px;
    height: 10px;
    margin: 2px 2px 0 2px;
    padding-left: 7px;
    border: 1px solid #2b2d30;
    border-radius: 3px 3px 0 0;
    background: linear-gradient(#a2a4a7, #808387);
}

.first-task { margin-left: 0; }
.task.current { background: #2c2e31; }

.task i {
    display: block;
    width: 11px;
    height: 4px;
    margin-top: 4px;
    background: #e5cd7b;
}

.task i.red { background: #cf4b3a; width: 6px; margin-left: 5px; }

.tray {
    display: flex;
    gap: 6px;
    align-items: flex-start;
    margin-left: auto;
    padding-right: 53px;
}

.tray .dots { margin-right: 50px; }

.tray b {
    width: 11px;
    height: 6px;
    margin-top: 4px;
}

.tray .green { background: #19b319; border-radius: 6px 6px 0 0; }
.tray .navy { background: #10107c; width: 15px; }
.tray .pink { background: #e8b5b8; }
.tray .white { background: #e3e3e3; width: 7px; }
.tray .yellow { background: #e5cf74; }
.tray .teal { background: #b5dbe8; }
.tray .thin { width: 3px; }
```
